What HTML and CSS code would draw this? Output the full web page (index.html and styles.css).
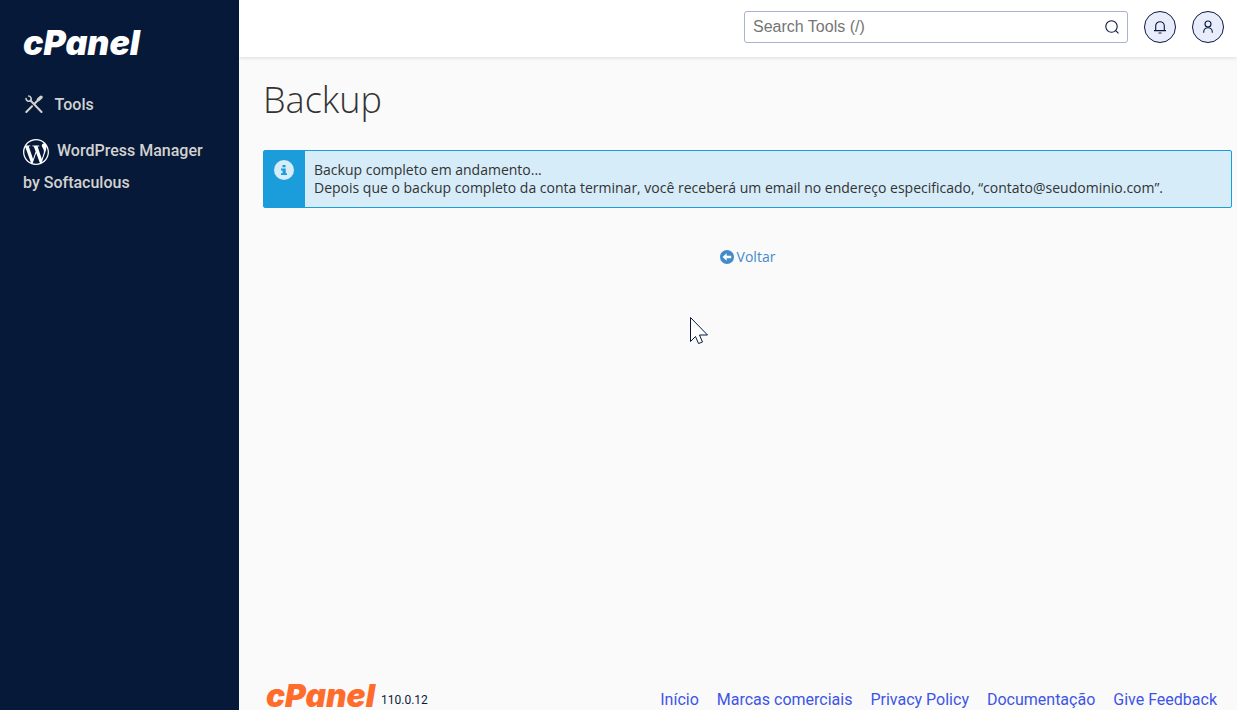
FILE: index.html
```html
<!DOCTYPE html>
<html lang="pt-BR">
<head>
<meta charset="utf-8">
<title>Backup - cPanel</title>
<link rel="stylesheet" href="styles.css">
</head>
<body>
<div class="shell">
  <aside class="sidebar">
    <a class="brand" href="#" aria-label="cPanel">
      <svg class="logo" viewBox="0 0 120 30" role="img" aria-label="cPanel"><text x="0" y="27">cPanel</text></svg>
    </a>
    <nav class="menu">
      <a class="menu-link" href="#">
        <svg class="tools-icon" viewBox="0 0 18 18" fill="none" stroke="currentColor" stroke-linecap="round" aria-hidden="true">
          <path stroke-width="2" d="M5.5 5.5 16.5 17"/>
          <path stroke-width="1.6" d="M1 3.5a2.8 2.8 0 0 0 4.6 2A2.8 2.8 0 0 0 3.7 1"/>
          <path stroke-width="2" d="M1.300 17 7 11.200M9.500 8.700 13 5.200"/>
          <path stroke-width="3.400" d="M13.500 4.500 16 2.200"/>
        </svg>
        <span>Tools</span>
      </a>
      <a class="menu-link wordpress" href="#">
        <svg class="wp-icon" viewBox="0 0 24 24" fill="#fff" aria-hidden="true"><path d="M21.469 6.825c.84 1.537 1.318 3.3 1.318 5.175 0 3.979-2.156 7.456-5.363 9.325l3.295-9.527c.615-1.54.82-2.771.82-3.864 0-.405-.026-.78-.07-1.11m-7.981.105c.647-.03 1.232-.105 1.232-.105.582-.075.514-.93-.067-.899 0 0-1.755.135-2.88.135-1.064 0-2.85-.15-2.85-.15-.585-.03-.661.855-.075.885 0 0 .54.061 1.125.09l1.68 4.605-2.37 7.08L5.354 6.9c.649-.03 1.234-.1 1.234-.1.585-.075.516-.93-.065-.896 0 0-1.746.138-2.874.138-.2 0-.438-.008-.69-.015C4.911 3.15 8.235 1.215 12 1.215c2.809 0 5.365 1.072 7.286 2.833-.046-.003-.091-.009-.141-.009-1.06 0-1.812.923-1.812 1.914 0 .89.513 1.643 1.06 2.531.411.72.89 1.643.89 2.977 0 .915-.354 1.994-.821 3.479l-1.075 3.585-3.9-11.61.001.014zM12 22.784c-1.059 0-2.081-.153-3.048-.437l3.237-9.406 3.315 9.087c.024.053.05.101.078.149-1.12.393-2.325.609-3.582.609M1.211 12c0-1.564.336-3.05.935-4.39L7.29 21.709C3.694 19.96 1.212 16.271 1.211 12M12 0C5.385 0 0 5.385 0 12s5.385 12 12 12 12-5.385 12-12S18.615 0 12 0"/></svg>
        <span>WordPress Manager</span> by Softaculous
      </a>
    </nav>
  </aside>
  <div class="page">
    <header class="topbar">
      <form class="search" role="search">
        <input class="search-input" type="text" placeholder="Search Tools (/)" aria-label="Search Tools">
        <button class="search-button" type="button" aria-label="Search">
          <svg class="icon" viewBox="0 0 16 16" aria-hidden="true"><circle cx="7.500" cy="7.500" r="5.700"/><path d="M11.700 11.700 14.500 14.300"/></svg>
        </button>
      </form>
      <button class="round-button" type="button" aria-label="Notifications">
        <svg class="icon" viewBox="0 0 16 16" aria-hidden="true"><path d="M3.700 11.500V7a4.300 4.300 0 0 1 8.600 0v4.500M2 11.600h12M6.500 14h3"/></svg>
      </button>
      <button class="round-button" type="button" aria-label="User">
        <svg class="icon" viewBox="0 0 16 16" aria-hidden="true"><circle cx="8" cy="5" r="3"/><path d="M3.700 13.800V13a4.300 4.300 0 0 1 8.600 0v.8"/></svg>
      </button>
    </header>
    <main class="content">
      <h1 class="title">Backup</h1>
      <div class="alert" role="status">
        <div class="alert-side">
          <svg class="info-icon" viewBox="0 0 20 20" aria-hidden="true"><circle cx="10" cy="10" r="10" fill="#d6ecf9"/><path fill="#1b9cdb" d="M8.500 5h3v2.300h-3zM7 8.600h4.700v4.600H13V15H7v-1.800h1.600v-2.800H7z"/></svg>
        </div>
        <div class="alert-text">
          <div>Backup completo em andamento...</div>
          <div>Depois que o backup completo da conta terminar, você receberá um email no endereço especificado, “contato@seudominio.com”.</div>
        </div>
      </div>
      <a class="back" href="#">
        <svg class="back-icon" viewBox="0 0 14 14" aria-hidden="true"><circle cx="7" cy="7" r="7" fill="#428bca"/><path fill="#fafafa" d="M2.500 7 6.700 3.200v2.600h4.500v2.400H6.700v2.600z"/></svg>
        <span>Voltar</span>
      </a>
    </main>
    <footer class="footer">
      <div class="version">
        <svg class="logo" viewBox="0 0 120 30" role="img" aria-label="cPanel"><text x="0" y="27">cPanel</text></svg>
        <span>110.0.12</span>
      </div>
      <nav class="footer-links">
        <a href="#">Início</a>
        <a href="#">Marcas comerciais</a>
        <a href="#">Privacy Policy</a>
        <a href="#">Documentação</a>
        <a href="#">Give Feedback</a>
      </nav>
    </footer>
  </div>
  <svg class="pointer" viewBox="0 0 20 28" aria-hidden="true"><path fill="#fff" stroke="#071a3e" d="M1.500 1.500v24l5-5 3 7 4-1.500-3-7h8z"/></svg>
</div>
</body>
</html>
```

FILE: styles.css
```css
* {
  box-sizing: border-box;
}

body {
  margin: 0;
  background: #fafafa;
  color: #333;
  font: 16px/24px Roboto, sans-serif;
}

a {
  text-decoration: none;
}

.shell {
  position: relative;
  display: flex;
  min-height: 100vh;
}

.sidebar {
  flex: 0 0 239px;
  padding: 28px 23px;
  background: #061939;
}

.brand,
.logo {
  display: block;
}

.logo {
  width: 120px;
  height: 30px;
  overflow: visible;
  fill: #fff;
  font: italic 900 34px Inter, sans-serif;
}

.menu {
  display: flex;
  flex-direction: column;
  gap: 14px;
  margin-top: 31px;
  font-weight: 500;
  line-height: 32px;
}

.menu-link {
  color: #d2d2cf;
}

.tools-icon {
  width: 18px;
  height: 18px;
  margin: 0 8px 0 2px;
  vertical-align: -3px;
}

.wp-icon {
  width: 26px;
  height: 26px;
  margin-right: 4px;
  vertical-align: middle;
}

.page {
  display: flex;
  flex: 1;
  flex-direction: column;
  min-width: 0;
}

.topbar {
  display: flex;
  align-items: center;
  justify-content: flex-end;
  gap: 16px;
  padding: 11px 13px 14px 24px;
  background: #fff;
  box-shadow: 0 1px 4px rgba(0, 0, 0, 0.12);
}

.search {
  display: flex;
  width: 384px;
  height: 32px;
  border: 1px solid #a9b3cd;
  border-radius: 3px;
  background: #fff;
}

.search-input {
  flex: 1;
  min-width: 0;
  padding: 0 8px;
  border: 0;
  background: none;
  color: #333;
  font: 16px "Liberation Sans", Arial, sans-serif;
}

.search-input::placeholder {
  color: #757575;
}

.search-button {
  display: grid;
  place-items: center;
  width: 30px;
  padding: 0;
  border: 0;
  background: none;
}

.round-button {
  display: grid;
  place-items: center;
  width: 32px;
  height: 32px;
  padding: 0;
  border: 1px solid #071a3e;
  border-radius: 50%;
  background: #e9edfb;
}

.icon {
  width: 16px;
  height: 16px;
  fill: none;
  stroke: #071a3e;
  stroke-width: 1.1;
}

.content {
  flex: 1;
  padding: 17px 5px 0 24px;
  font: 14px/18px "Open Sans", sans-serif;
}

.title {
  margin: 0;
  font-size: 36px;
  font-weight: 300;
  line-height: 52px;
}

.alert {
  display: flex;
  margin-top: 24px;
  border: 1px solid #1b9cdb;
  border-radius: 2px;
  background: #d6ecf9;
}

.alert-side {
  flex: 0 0 41px;
  padding: 9px 10px;
  background: #1b9cdb;
}

.info-icon {
  display: block;
  width: 20px;
  height: 20px;
}

.alert-text {
  padding: 10px 9px;
}

.back {
  display: flex;
  align-items: center;
  justify-content: center;
  gap: 3px;
  margin-top: 40px;
  color: #428bca;
}

.back-icon {
  width: 14px;
  height: 14px;
}

.footer {
  display: flex;
  align-items: flex-end;
  justify-content: space-between;
  padding: 0 20px 0 24px;
}

.version {
  display: flex;
  align-items: flex-end;
  color: #071a3e;
  font-size: 12px;
  line-height: 20px;
}

.version .logo {
  width: 118px;
  height: 28px;
  fill: #ff6c2c;
}

.footer-links {
  display: flex;
  gap: 18px;
  line-height: 20px;
}

.footer-links a {
  color: #3c55e6;
}

.pointer {
  position: absolute;
  top: 316px;
  left: 689px;
  width: 20px;
  height: 28px;
}
```
